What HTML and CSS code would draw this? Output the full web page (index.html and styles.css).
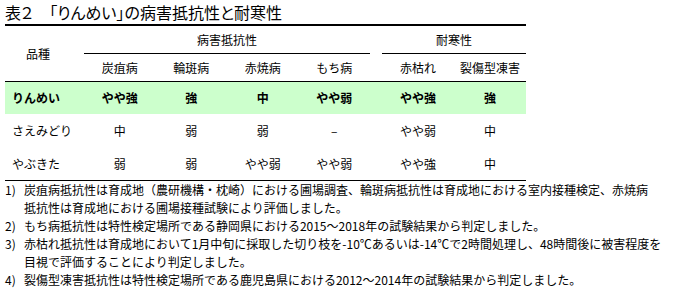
FILE: index.html
```html
<!DOCTYPE html>
<html lang="ja">
<head>
<meta charset="utf-8">
<title>表２ 「りんめい」の病害抵抗性と耐寒性</title>
<link rel="stylesheet" href="styles.css">
</head>
<body>
<div class="wrap">
  <h1 class="title">表２　「りんめい」の病害抵抗性と耐寒性</h1>
  <table class="tbl">
    <colgroup>
      <col class="c-name">
      <col class="c-d"><col class="c-d"><col class="c-d"><col class="c-d">
      <col class="c-gap">
      <col class="c-d"><col class="c-d">
    </colgroup>
    <thead>
      <tr class="h1row">
        <th class="name-h" rowspan="2">品種</th>
        <th class="grp" colspan="4">病害抵抗性</th>
        <th class="gap" rowspan="2"></th>
        <th class="grp" colspan="2">耐寒性</th>
      </tr>
      <tr class="h2row">
        <th>炭疽病</th>
        <th>輪斑病</th>
        <th>赤焼病</th>
        <th>もち病</th>
        <th>赤枯れ</th>
        <th>裂傷型凍害</th>
      </tr>
    </thead>
    <tbody>
      <tr class="hl">
        <td class="name">りんめい</td>
        <td>やや強</td><td>強</td><td>中</td><td>やや弱</td>
        <td class="gap"></td>
        <td>やや強</td><td>強</td>
      </tr>
      <tr>
        <td class="name">さえみどり</td>
        <td>中</td><td>弱</td><td>弱</td><td>–</td>
        <td class="gap"></td>
        <td>やや弱</td><td>中</td>
      </tr>
      <tr class="last">
        <td class="name">やぶきた</td>
        <td>弱</td><td>弱</td><td>やや弱</td><td>やや弱</td>
        <td class="gap"></td>
        <td>やや強</td><td>中</td>
      </tr>
    </tbody>
  </table>
  <ol class="notes">
    <li><span class="no">1)</span><span class="tx">炭疽病抵抗性は育成地（農研機構・枕崎）における圃場調査、輪斑病抵抗性は育成地における室内接種検定、赤焼病<br>抵抗性は育成地における圃場接種試験により評価しました。</span></li>
    <li><span class="no">2)</span><span class="tx">もち病抵抗性は特性検定場所である静岡県における2015～2018年の試験結果から判定しました。</span></li>
    <li><span class="no">3)</span><span class="tx">赤枯れ抵抗性は育成地において1月中旬に採取した切り枝を-10℃あるいは-14℃で2時間処理し、48時間後に被害程度を<br>目視で評価することにより判定しました。</span></li>
    <li><span class="no">4)</span><span class="tx">裂傷型凍害抵抗性は特性検定場所である鹿児島県における2012～2014年の試験結果から判定しました。</span></li>
  </ol>
</div>
</body>
</html>
```
FILE: styles.css
```css
html, body {
  margin: 0;
  padding: 0;
  background: #fff;
}
body {
  font-family: "Noto Sans CJK JP", "Noto Sans", sans-serif;
  color: #000;
  font-size: 12px;
}
.wrap {
  padding-left: 5px;
}
.title {
  width: 521px;
  margin: 0;
  font-size: 16px;
  font-weight: normal;
  font-feature-settings: "palt";
  line-height: 24px;
  height: 24px;
  border-bottom: 2px solid #000;
  white-space: nowrap;
}
.tbl {
  width: 521px;
  table-layout: fixed;
  border-collapse: separate;
  border-spacing: 0;
}
.c-name { width: 79px; }
.c-d { width: 71.5px; }
.c-gap { width: 12px; }
.c-d:nth-child(7), .c-d:nth-child(8) { width: 72px; }
.tbl th, .tbl td {
  padding: 0;
  text-align: center;
  vertical-align: middle;
  font-weight: normal;
  line-height: 16px;
  white-space: nowrap;
}
.h1row th { height: 27px; }
.h2row th { height: 27px; }
.grp { border-bottom: 1px solid #000; }
.name-h {
  border-bottom: 1px solid #000;
  padding-right: 13px !important;
}
.h2row th, .h1row .gap { border-bottom: 1px solid #000; }
.tbl td { height: 33px; }
.hl td {
  height: 32px;
  background: #ccffcc;
  font-weight: bold;
}
.last td { border-bottom: 1px solid #000; }
.tbl td.name {
  text-align: left;
  padding-left: 7px;
}
.notes {
  list-style: none;
  margin: 0;
  padding: 0;
  width: 680px;
}
.notes li {
  display: flex;
  line-height: 18px;
  white-space: nowrap;
}
.notes .no {
  width: 19px;
  flex: none;
}
```
